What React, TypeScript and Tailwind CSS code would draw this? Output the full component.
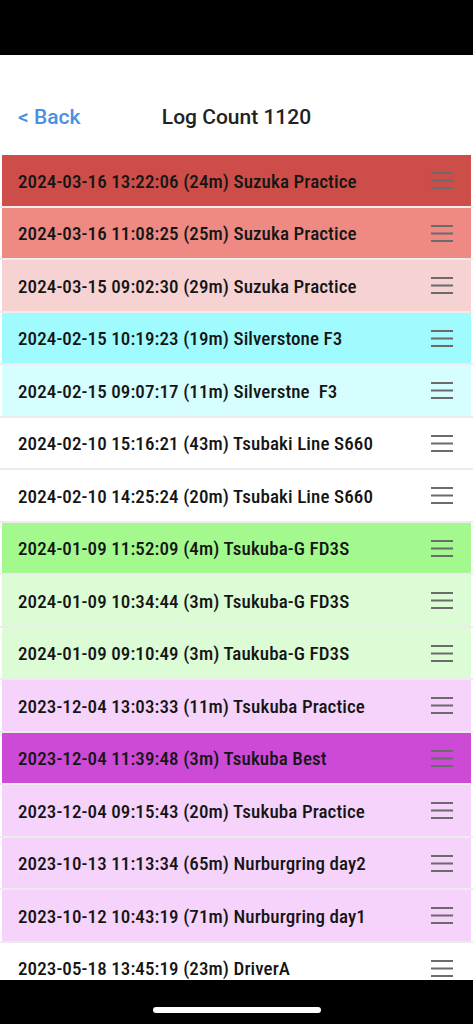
import React from "react";

const rows: { text: string; bg: string }[] = [
  { text: "2024-03-16 13:22:06 (24m) Suzuka Practice", bg: "bg-[#cd4d48]" },
  { text: "2024-03-16 11:08:25 (25m) Suzuka Practice", bg: "bg-[#ee8a83]" },
  { text: "2024-03-15 09:02:30 (29m) Suzuka Practice", bg: "bg-[#f7d2d2]" },
  { text: "2024-02-15 10:19:23 (19m) Silverstone F3", bg: "bg-[#9ffbfd]" },
  { text: "2024-02-15 09:07:17 (11m) Silverstne\u00a0\u00a0F3", bg: "bg-[#d6fefe]" },
  { text: "2024-02-10 15:16:21 (43m) Tsubaki Line S660", bg: "bg-white" },
  { text: "2024-02-10 14:25:24 (20m) Tsubaki Line S660", bg: "bg-white" },
  { text: "2024-01-09 11:52:09 (4m) Tsukuba-G FD3S", bg: "bg-[#a3f98e]" },
  { text: "2024-01-09 10:34:44 (3m) Tsukuba-G FD3S", bg: "bg-[#dbfcd5]" },
  { text: "2024-01-09 09:10:49 (3m) Taukuba-G FD3S", bg: "bg-[#dbfcd5]" },
  { text: "2023-12-04 13:03:33 (11m) Tsukuba Practice", bg: "bg-[#f5d3fa]" },
  { text: "2023-12-04 11:39:48 (3m) Tsukuba Best", bg: "bg-[#cc4ad6]" },
  { text: "2023-12-04 09:15:43 (20m) Tsukuba Practice", bg: "bg-[#f5d3fa]" },
  { text: "2023-10-13 11:13:34 (65m) Nurburgring day2", bg: "bg-[#f5d3fa]" },
  { text: "2023-10-12 10:43:19 (71m) Nurburgring day1", bg: "bg-[#f5d3fa]" },
  { text: "2023-05-18 13:45:19 (23m) DriverA", bg: "bg-white" },
];

function Hamburger() {
  return (
    <svg width="22" height="18" viewBox="0 0 22 18" className="shrink-0">
      <rect x="0" y="1" width="22" height="2" fill="#6b6b6b" />
      <rect x="0" y="8.5" width="22" height="2" fill="#6b6b6b" />
      <rect x="0" y="16" width="22" height="2" fill="#6b6b6b" />
    </svg>
  );
}

export default function App() {
  return (
    <div className="relative w-[473px] h-[1024px] overflow-hidden bg-white font-['Roboto',sans-serif]">
      <div className="h-[55px] bg-black" />
      <div className="relative h-[100px] flex items-center pt-[24px]">
        <button className="absolute left-[18px] text-[21px] font-medium text-[#4a90e2] leading-none">
          &lt; Back
        </button>
        <div className="w-full text-center text-[21px] font-medium text-[#222] leading-none">
          Log Count 1120
        </div>
      </div>
      <div className="flex flex-col">
        {rows.map((r, i) => (
          <div key={i} className="border-b-2 border-[#ececec]">
            <div
              className={`mx-[2px] h-[50.5px] flex items-center justify-between pl-[16px] pr-[18px] ${r.bg}`}
            >
              <span className="pt-[3px] text-[19px] tracking-[0.1px] font-medium text-[#151515] whitespace-pre font-['Roboto_Condensed','Liberation_Sans_Narrow','Roboto',sans-serif] [font-stretch:condensed]">
                {r.text}
              </span>
              <Hamburger />
            </div>
          </div>
        ))}
      </div>
      <div className="absolute left-0 right-0 bottom-0 h-[44px] bg-black flex justify-center">
        <div className="mt-[27px] w-[168px] h-[6px] rounded-full bg-white" />
      </div>
    </div>
  );
}
